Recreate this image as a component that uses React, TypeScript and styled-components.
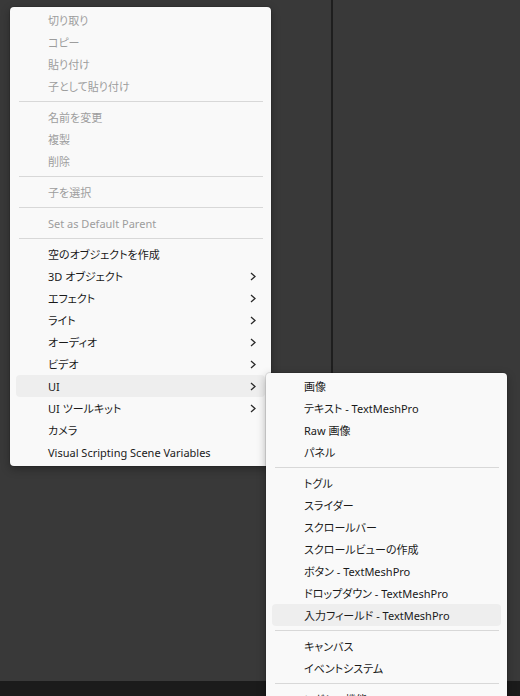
import React from 'react';
import styled, { createGlobalStyle } from 'styled-components';

const Global = createGlobalStyle`
  html, body { margin: 0; padding: 0; background: #393939; overflow: hidden; }
  #root { width: 520px; height: 696px; }
`;

const Screen = styled.div`
  position: relative;
  width: 520px;
  height: 696px;
  display: flex;
  flex-direction: column;
  background: #393939;
  overflow: hidden;
  font-family: "Noto Sans", "Noto Sans CJK JP", sans-serif;
`;

const Panels = styled.div`
  flex: 1;
  display: flex;
`;

const Panel = styled.div<{ $w?: number }>`
  ${(p) => (p.$w ? `width: ${p.$w}px;` : 'flex: 1;')}
  background: #393939;
`;

const Divider = styled.div`
  width: 2px;
  background: #1e1e1e;
`;

const StatusBar = styled.div`
  height: 15px;
  background: #1b1b1b;
`;

const Menu = styled.div<{ $x: number; $y: number; $w: number }>`
  position: absolute;
  left: ${(p) => p.$x}px;
  top: ${(p) => p.$y}px;
  width: ${(p) => p.$w}px;
  box-sizing: border-box;
  padding: 2px 6px 3px;
  background: #f9f9f9;
  border-radius: 4px;
  box-shadow: 0 0 0 1px rgba(0, 0, 0, 0.1), 0 3px 10px rgba(0, 0, 0, 0.3);
  display: flex;
  flex-direction: column;
`;

const Item = styled.div<{ $disabled?: boolean; $active?: boolean }>`
  box-sizing: border-box;
  height: 22px;
  display: flex;
  align-items: center;
  padding: 1px 9px 0 32px;
  border-radius: 4px;
  font-size: 11px;
  line-height: 21px;
  font-feature-settings: "palt";
  color: ${(p) => (p.$disabled ? '#9d9d9d' : '#1a1a1a')};
  background: ${(p) => (p.$active ? '#eeeeee' : 'transparent')};
`;

const Label = styled.span`
  flex: 1;
  white-space: nowrap;
`;

const Sep = styled.div`
  height: 1px;
  background: #d8d8d8;
  margin: 4px 2px 4px 3px;
`;

const Chevron = () => (
  <svg width="6" height="9" viewBox="0 0 6 9">
    <path d="M1 1 L5 4.5 L1 8" fill="none" stroke="#2a2a2a" strokeWidth="1.3" />
  </svg>
);

type Entry = { label?: string; sep?: boolean; disabled?: boolean; sub?: boolean; active?: boolean };

const mainItems: Entry[] = [
  { label: '切り取り', disabled: true },
  { label: 'コピー', disabled: true },
  { label: '貼り付け', disabled: true },
  { label: '子として貼り付け', disabled: true },
  { sep: true },
  { label: '名前を変更', disabled: true },
  { label: '複製', disabled: true },
  { label: '削除', disabled: true },
  { sep: true },
  { label: '子を選択', disabled: true },
  { sep: true },
  { label: 'Set as Default Parent', disabled: true },
  { sep: true },
  { label: '空のオブジェクトを作成' },
  { label: '3D オブジェクト', sub: true },
  { label: 'エフェクト', sub: true },
  { label: 'ライト', sub: true },
  { label: 'オーディオ', sub: true },
  { label: 'ビデオ', sub: true },
  { label: 'UI', sub: true, active: true },
  { label: 'UI ツールキット', sub: true },
  { label: 'カメラ' },
  { label: 'Visual Scripting Scene Variables' },
];

const subItems: Entry[] = [
  { label: '画像' },
  { label: 'テキスト - TextMeshPro' },
  { label: 'Raw 画像' },
  { label: 'パネル' },
  { sep: true },
  { label: 'トグル' },
  { label: 'スライダー' },
  { label: 'スクロールバー' },
  { label: 'スクロールビューの作成' },
  { label: 'ボタン - TextMeshPro' },
  { label: 'ドロップダウン - TextMeshPro' },
  { label: '入力フィールド - TextMeshPro', active: true },
  { sep: true },
  { label: 'キャンバス' },
  { label: 'イベントシステム' },
  { sep: true },
  { label: 'レガシー機能' },
];

const renderItems = (items: Entry[]) =>
  items.map((it, i) =>
    it.sep ? (
      <Sep key={i} />
    ) : (
      <Item key={i} $disabled={it.disabled} $active={it.active}>
        <Label>{it.label}</Label>
        {it.sub && <Chevron />}
      </Item>
    )
  );

export default function App() {
  return (
    <>
      <Global />
      <Screen>
        <Panels>
          <Panel $w={331} />
          <Divider />
          <Panel />
        </Panels>
        <StatusBar />
        <Menu $x={10} $y={7} $w={261}>
          {renderItems(mainItems)}
        </Menu>
        <Menu $x={266} $y={373} $w={241}>
          {renderItems(subItems)}
        </Menu>
      </Screen>
    </>
  );
}
